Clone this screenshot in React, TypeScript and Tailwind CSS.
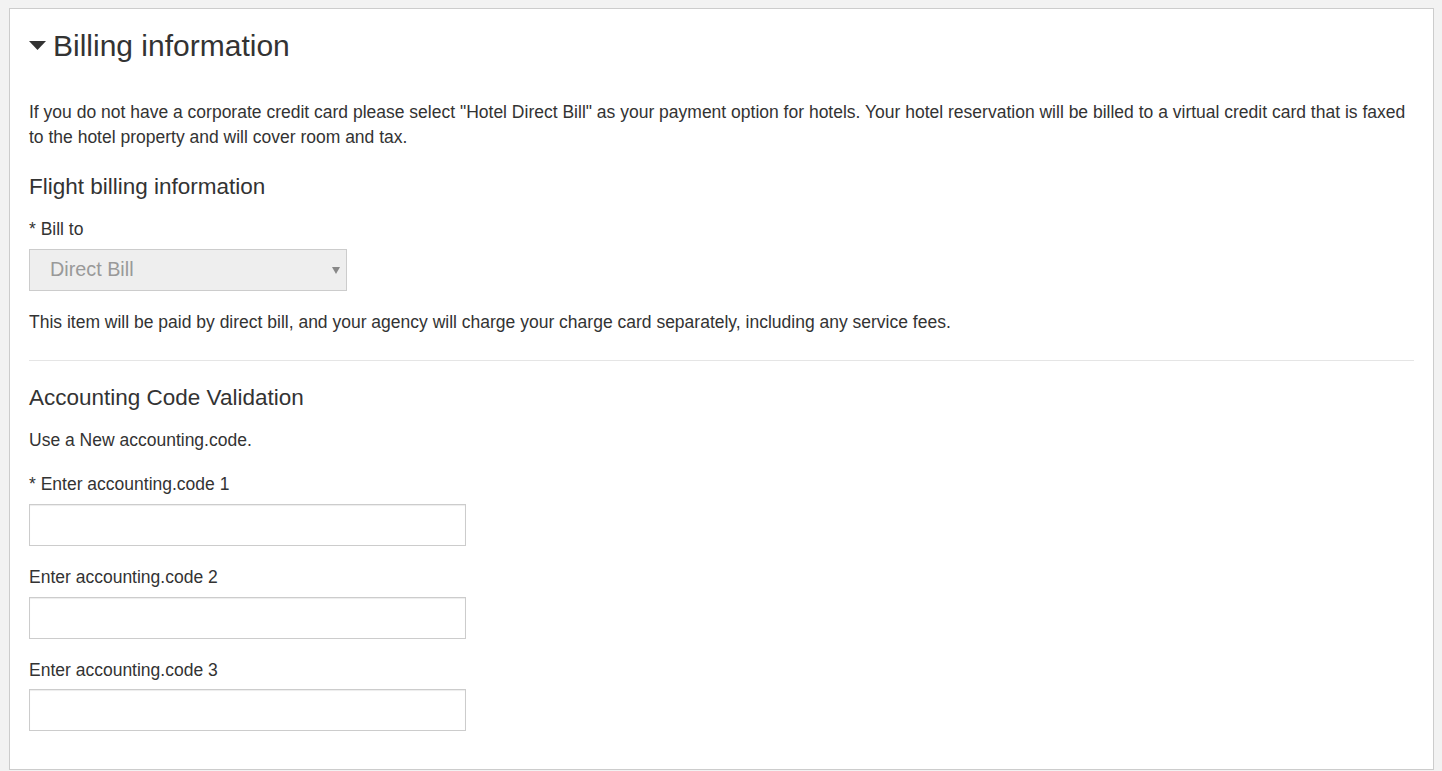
const fields = [
  { label: '* Enter accounting.code 1', first: true },
  { label: 'Enter accounting.code 2', first: false },
  { label: 'Enter accounting.code 3', first: false },
];

function CaretDown({ className = '' }: { className?: string }) {
  return (
    <svg viewBox="0 0 17 9" width="17" height="9" className={className} aria-hidden="true">
      <path d="M0 0H17L8.5 9Z" fill="#333" />
    </svg>
  );
}

function TextField({ label, first }: { label: string; first: boolean }) {
  return (
    <div className="mt-[19px]">
      <label className="block leading-[25px]">{label}</label>
      <input type="text" className={`${first ? 'mt-[7px]' : 'mt-[6.5px]'} block h-[42px] w-[437px] border border-[#ccc] bg-white shadow-[inset_0_1px_1px_rgba(0,0,0,0.075)] outline-none`} />
    </div>
  );
}

export default function App() {
  return (
    <div className="min-h-screen bg-[#f2f2f2] pl-[9px] pr-[8px] pt-[8px] font-['Liberation_Sans',Arial,sans-serif] text-[17.5px] text-[#333]">
      <section className="border border-[#ccc] bg-white px-[19px] pb-[38px] pt-[19px]">
        <h1 className="flex items-center gap-[7px] text-[30px] leading-[36px]">
          <CaretDown className="-mt-[2px]" />
          <span>Billing information</span>
        </h1>

        <p className="mt-[36px] leading-[25px]">
          If you do not have a corporate credit card please select "Hotel Direct Bill" as your payment option for hotels. Your hotel reservation will be billed to a virtual credit card that is faxed to the hotel property and will cover room and tax.
        </p>

        <h2 className="mt-[23px] text-[22.5px] leading-[27px]">Flight billing information</h2>

        <div className="mt-[16.5px]">
          <label className="block leading-[25px]">* Bill to</label>
          <div className="mt-[7.5px] flex h-[42px] w-[318px] items-center justify-between border border-[#ccc] bg-[#eee] pl-[20px] pr-[6px] text-[19.8px] text-[#999]">
            <span>Direct Bill</span>
            <svg viewBox="0 0 8 7" width="8" height="7" aria-hidden="true">
              <path d="M0 0H8L4 7Z" fill="#888" />
            </svg>
          </div>
        </div>

        <p className="mt-[19px] leading-[25px]">
          This item will be paid by direct bill, and your agency will charge your charge card separately, including any service fees.
        </p>

        <hr className="mt-[25px] border-0 border-t border-[#e5e5e5]" />

        <h2 className="mt-[23px] text-[22.5px] leading-[27px]">Accounting Code Validation</h2>

        <p className="mt-[17px] leading-[25px]">Use a New accounting.code.</p>

        {fields.map((f) => (
          <TextField key={f.label} label={f.label} first={f.first} />
        ))}
      </section>
    </div>
  );
}
